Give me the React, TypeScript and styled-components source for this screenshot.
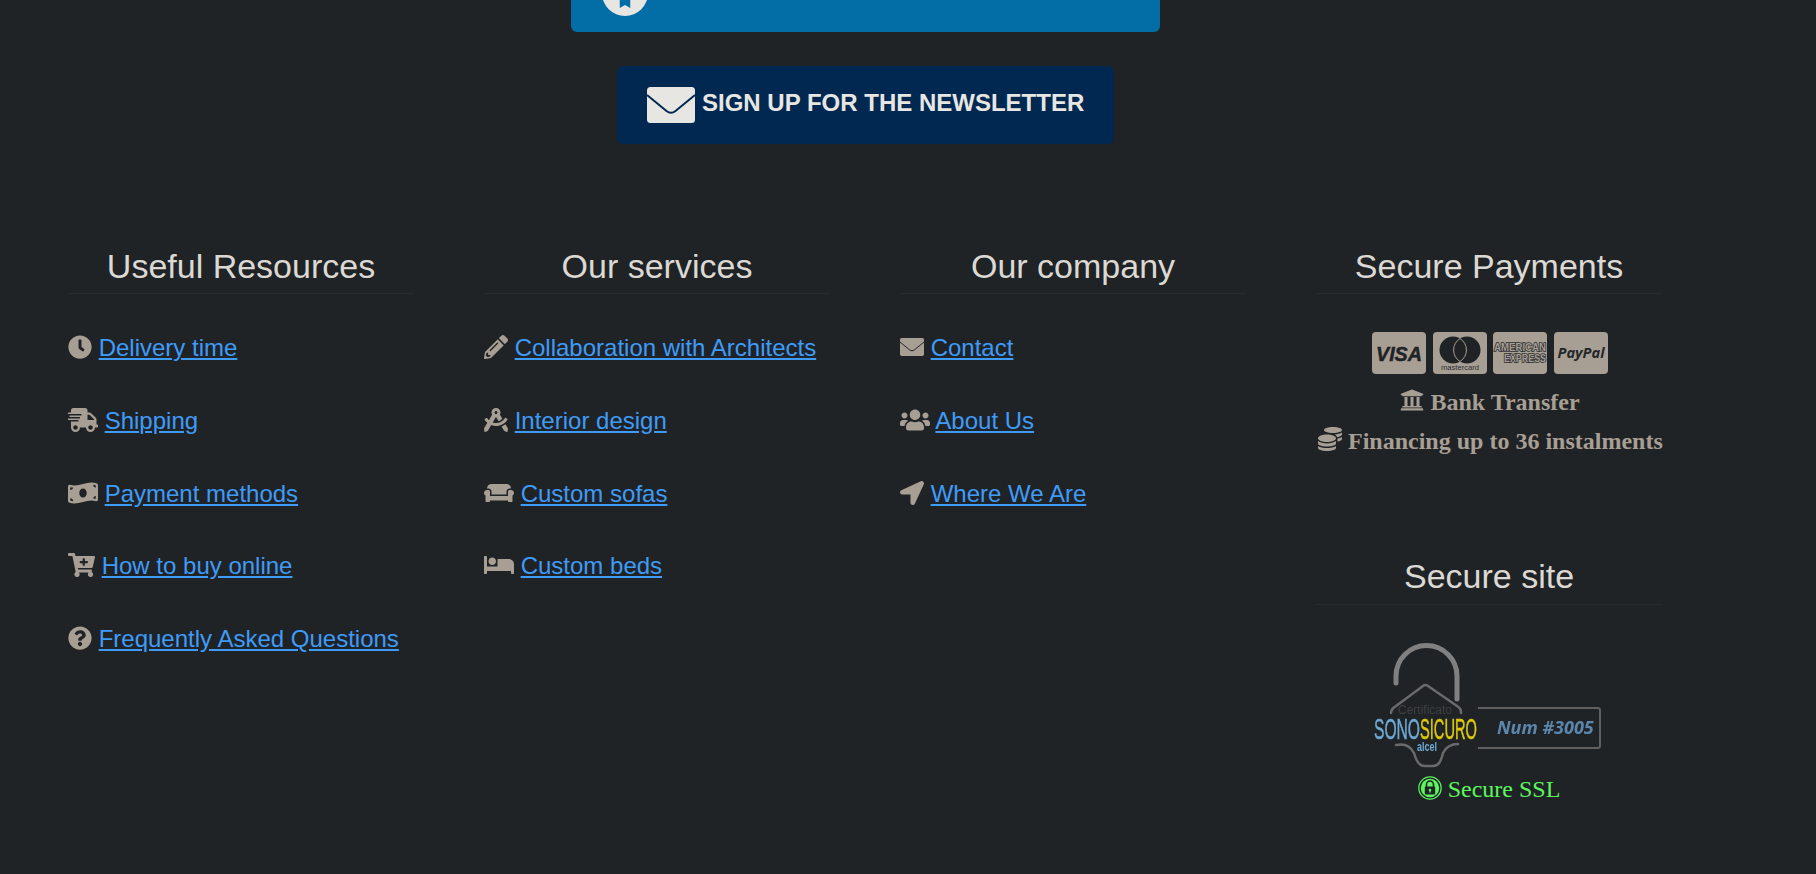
import React from "react";
import styled, { createGlobalStyle } from "styled-components";
import {
  FaClock, FaShippingFast, FaMoneyBillWave, FaCartPlus, FaQuestionCircle,
  FaPencilAlt, FaDraftingCompass, FaCouch, FaBed, FaUsers,
  FaLocationArrow, FaUniversity, FaCoins, FaBookmark,
} from "react-icons/fa";

const Global = createGlobalStyle`
  html, body { margin: 0; padding: 0; background: #1f2326; }
  body { font-family: "Liberation Sans", Arial, sans-serif; overflow: hidden; }
`;

const Page = styled.div`
  width: 1664px;
  height: 874px;
  margin-left: 33px;
  display: flex;
  flex-direction: column;
  align-items: center;
  overflow: hidden;
`;

const TopBanner = styled.div`
  width: 589px;
  height: 32px;
  flex: none;
  margin-left: 1px;
  padding-left: 31px;
  box-sizing: border-box;
  background: #026ea5;
  border-radius: 0 0 6px 6px;
  display: flex;
  align-items: flex-end;
  overflow: hidden;
`;

const BannerDisc = styled.div`
  width: 46px;
  height: 46px;
  flex: none;
  margin-bottom: 16px;
  border-radius: 50%;
  background: #e8e6e3;
  color: #026ea5;
  display: flex;
  align-items: flex-end;
  justify-content: center;
  padding-bottom: 8px;
  box-sizing: border-box;
`;

const NewsletterButton = styled.a`
  width: 497px;
  height: 78px;
  flex: none;
  margin: 34px 0 103px 1px;
  box-sizing: border-box;
  padding-left: 30px;
  background: #002850;
  border-radius: 6px;
  display: flex;
  align-items: center;
  gap: 7px;
  color: #e8e6e3;
  font-size: 24px;
  font-weight: 700;
  white-space: nowrap;
`;

const NewsletterLabel = styled.span`
  position: relative;
  top: -2px;
`;

const Columns = styled.div`
  width: 100%;
  display: grid;
  grid-template-columns: repeat(4, 416px);
`;

const Column = styled.section`
  padding: 0 35px;
  box-sizing: border-box;
  min-width: 0;
`;

const Heading = styled.h3<{ $second?: boolean }>`
  margin: ${(p) => (p.$second ? "96px" : "0")} 0 0;
  padding: 0 0 8px;
  font-size: 34px;
  line-height: 38.4px;
  font-weight: 400;
  color: #dcd9d4;
  text-align: center;
  border-bottom: 1px solid #272b2e;
`;

const LinkList = styled.ul`
  list-style: none;
  margin: 37px 0 0;
  padding: 0;
`;

const LinkRow = styled.li<{ $iconWidth: number }>`
  font-size: 24px;
  line-height: 33.6px;
  margin-bottom: 39px;
  color: #a89f94;
  white-space: nowrap;
  svg {
    width: ${(p) => p.$iconWidth}px;
    height: 24px;
    vertical-align: -3px;
  }
`;

const RowLink = styled.a`
  color: #3f9bf8;
  text-decoration: underline;
`;

const CardRow = styled.div`
  margin-top: 38px;
  margin-left: 2px;
  display: flex;
  justify-content: center;
  gap: 6.7px;
`;

const PayCard = styled.div`
  width: 54px;
  height: 42px;
  border-radius: 4px;
  background: #a89f94;
  overflow: hidden;
  svg { display: block; }
`;

const PayLine = styled.p<{ $first?: boolean }>`
  margin: ${(p) => (p.$first ? "9px" : "0")} 0 0 2px;
  height: 39px;
  line-height: 39px;
  text-align: center;
  font-family: "Liberation Serif", "Times New Roman", serif;
  font-weight: 700;
  font-size: 24px;
  color: #a89f94;
  white-space: nowrap;
  svg { vertical-align: -2px; }
`;

const BadgeWrap = styled.div`
  margin-top: 36px;
  margin-left: -4px;
  display: flex;
  justify-content: center;
  svg { display: block; filter: blur(0.5px); }
`;

const SslLine = styled.p`
  margin: 0;
  line-height: 36px;
  text-align: center;
  font-family: "Liberation Serif", "Times New Roman", serif;
  font-size: 24px;
  color: #5cf75c;
  white-space: nowrap;
  svg { vertical-align: -3px; }
`;

const EnvelopeGlyph = ({ size, line }: { size: number; line: string }) => (
  <svg width={size} height={size} viewBox="0 -6 48 48">
    <rect width="48" height="36" rx="3.5" fill="currentColor" />
    <path d="M0 8 L19.5 24 Q24 27.5 28.5 24 L48 8" fill="none" stroke={line} strokeWidth="2" />
  </svg>
);

type Item = { icon: React.ReactNode; label: string; iconWidth: number };

const useful: Item[] = [
  { icon: <FaClock />, label: "Delivery time", iconWidth: 24 },
  { icon: <FaShippingFast />, label: "Shipping", iconWidth: 30 },
  { icon: <FaMoneyBillWave />, label: "Payment methods", iconWidth: 30 },
  { icon: <FaCartPlus />, label: "How to buy online", iconWidth: 27 },
  { icon: <FaQuestionCircle />, label: "Frequently Asked Questions", iconWidth: 24 },
];
const services: Item[] = [
  { icon: <FaPencilAlt />, label: "Collaboration with Architects", iconWidth: 24 },
  { icon: <FaDraftingCompass />, label: "Interior design", iconWidth: 24 },
  { icon: <FaCouch />, label: "Custom sofas", iconWidth: 30 },
  { icon: <FaBed />, label: "Custom beds", iconWidth: 30 },
];
const company: Item[] = [
  { icon: <EnvelopeGlyph size={24} line="#1f2326" />, label: "Contact", iconWidth: 24 },
  { icon: <FaUsers />, label: "About Us", iconWidth: 30 },
  { icon: <FaLocationArrow />, label: "Where We Are", iconWidth: 24 },
];

const Links = ({ items }: { items: Item[] }) => (
  <LinkList>
    {items.map((it) => (
      <LinkRow key={it.label} $iconWidth={it.iconWidth}>
        {it.icon} <RowLink href="#">{it.label}</RowLink>
      </LinkRow>
    ))}
  </LinkList>
);

const Visa = () => (
  <svg width="54" height="42" viewBox="0 0 54 42">
    <text x="4" y="28.5" fontFamily="'Liberation Sans', sans-serif" fontWeight="700" fontStyle="italic" fontSize="21" textLength="46" lengthAdjust="spacingAndGlyphs" fill="#1f2326" stroke="#1f2326" strokeWidth="0.5">VISA</text>
  </svg>
);

const Mastercard = () => (
  <svg width="54" height="42" viewBox="0 0 54 42">
    <circle cx="20" cy="18" r="13.5" fill="#1f2326" />
    <circle cx="34" cy="18" r="13.5" fill="#1f2326" />
    <path d="M27 6.5a13.5 13.5 0 0 1 0 23a13.5 13.5 0 0 1 0-23z" fill="#1f2326" stroke="#a89f94" strokeWidth="1" />
    <text x="27" y="38" textAnchor="middle" fontFamily="'Liberation Sans', sans-serif" fontSize="7" textLength="38" lengthAdjust="spacingAndGlyphs" fill="#2a2d30">mastercard</text>
  </svg>
);

const Amex = () => (
  <svg width="54" height="42" viewBox="0 0 54 42">
    <text x="1" y="18.5" fontFamily="'Liberation Sans', sans-serif" fontWeight="700" fontSize="10.5" textLength="52" lengthAdjust="spacingAndGlyphs" fill="#a89f94" stroke="#2a2d30" strokeWidth="1.6" paintOrder="stroke">AMERICAN</text>
    <text x="11" y="29.5" fontFamily="'Liberation Sans', sans-serif" fontWeight="700" fontSize="10.5" textLength="42" lengthAdjust="spacingAndGlyphs" fill="#a89f94" stroke="#2a2d30" strokeWidth="1.6" paintOrder="stroke">EXPRESS</text>
  </svg>
);

const PayPal = () => (
  <svg width="54" height="42" viewBox="0 0 54 42">
    <text x="3.5" y="26" fontFamily="'Open Sans', sans-serif" fontWeight="700" fontStyle="italic" fontSize="15" textLength="47" lengthAdjust="spacingAndGlyphs" fill="#23272a">PayPal</text>
  </svg>
);

const SonoBadge = () => (
  <svg width="235" height="130" viewBox="1370 640 235 130">
    <path d="M1396 682 V675 A30.5 30.5 0 0 1 1457 675 V698" fill="none" stroke="#808080" strokeWidth="5" strokeLinecap="round" />
    <path d="M1391 712 C1391 708 1393 707 1396 705 L1423 685 Q1425 683 1428 685 L1457 705 C1460 707 1461 708 1461 712" fill="none" stroke="#6a6a6a" strokeWidth="2.5" strokeLinecap="round" strokeLinejoin="round" />
    <text x="1425" y="713" textAnchor="middle" fontFamily="'Liberation Sans', sans-serif" fontSize="12" fill="#3e4042">Certificato</text>
    <text x="1374" y="738" fontFamily="'Liberation Sans', sans-serif" fontSize="29" textLength="46" lengthAdjust="spacingAndGlyphs" fill="#6ea8d4" stroke="#6ea8d4" strokeWidth="0.5">SONO</text>
    <text x="1420" y="738" fontFamily="'Liberation Sans', sans-serif" fontSize="29" textLength="57" lengthAdjust="spacingAndGlyphs" fill="#dcc80c" stroke="#dcc80c" strokeWidth="0.5">SICURO</text>
    <path d="M1396 744 C1405 742 1411 746 1414 752 C1417 762 1420 765 1425 765 L1433 765 C1439 765 1441 760 1443 752 C1446 746 1452 743 1458 743" fill="none" stroke="#6a6a6a" strokeWidth="2.5" strokeLinecap="round" />
    <text x="1427" y="750" textAnchor="middle" fontFamily="'Liberation Sans', sans-serif" fontSize="12" fontWeight="700" textLength="20" lengthAdjust="spacingAndGlyphs" fill="#6ea8d4">alcel</text>
    <path d="M1478 707 L1598 707 Q1600 707 1600 709 L1600 745 Q1600 747 1598 747 L1478 747" fill="none" stroke="#5f5f5f" strokeWidth="2" />
    <text x="1497" y="733" fontFamily="'Open Sans', sans-serif" fontWeight="700" fontStyle="italic" fontSize="18" fill="#5c86ac">Num #3005</text>
  </svg>
);

const LockCircle = () => (
  <svg width="24" height="24" viewBox="0 0 24 24">
    <circle cx="12" cy="12" r="11.2" fill="none" stroke="#5cf75c" strokeWidth="1.2" />
    <circle cx="12" cy="12" r="9.2" fill="#5cf75c" />
    <path d="M8.5 11V8.5a3.5 3.5 0 0 1 7 0V11" fill="none" stroke="#1f2326" strokeWidth="1.6" />
    <rect x="6.8" y="10.5" width="10.4" height="8" rx="1" fill="#1f2326" />
    <circle cx="12" cy="14" r="1.3" fill="#5cf75c" />
    <rect x="11.4" y="14" width="1.2" height="2.6" fill="#5cf75c" />
  </svg>
);

export default function App() {
  return (
    <>
      <Global />
      <Page>
        <TopBanner>
          <BannerDisc>
            <FaBookmark size={14} />
          </BannerDisc>
        </TopBanner>
        <NewsletterButton>
          <EnvelopeGlyph size={48} line="#002850" />
          <NewsletterLabel>SIGN UP FOR THE NEWSLETTER</NewsletterLabel>
        </NewsletterButton>
        <Columns>
          <Column>
            <Heading>Useful Resources</Heading>
            <Links items={useful} />
          </Column>
          <Column>
            <Heading>Our services</Heading>
            <Links items={services} />
          </Column>
          <Column>
            <Heading>Our company</Heading>
            <Links items={company} />
          </Column>
          <Column>
            <Heading>Secure Payments</Heading>
            <CardRow>
              <PayCard><Visa /></PayCard>
              <PayCard><Mastercard /></PayCard>
              <PayCard><Amex /></PayCard>
              <PayCard><PayPal /></PayCard>
            </CardRow>
            <PayLine $first><FaUniversity size={24} /> Bank Transfer</PayLine>
            <PayLine><FaCoins size={24} /> Financing up to 36 instalments</PayLine>
            <Heading $second>Secure site</Heading>
            <BadgeWrap><SonoBadge /></BadgeWrap>
            <SslLine><LockCircle /> Secure SSL</SslLine>
          </Column>
        </Columns>
      </Page>
    </>
  );
}
